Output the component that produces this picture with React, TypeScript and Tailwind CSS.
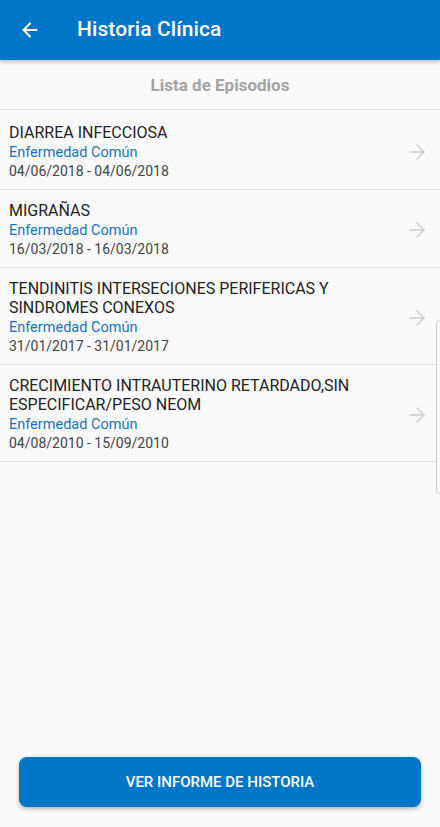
import { ArrowLeft, ArrowRight } from 'lucide-react';

type Episode = {
  title: string;
  type: string;
  dates: string;
};

const episodes: Episode[] = [
  { title: 'DIARREA INFECCIOSA', type: 'Enfermedad Común', dates: '04/06/2018 - 04/06/2018' },
  { title: 'MIGRAÑAS', type: 'Enfermedad Común', dates: '16/03/2018 - 16/03/2018' },
  {
    title: 'TENDINITIS INTERSECIONES PERIFERICAS Y SINDROMES CONEXOS',
    type: 'Enfermedad Común',
    dates: '31/01/2017 - 31/01/2017',
  },
  {
    title: 'CRECIMIENTO INTRAUTERINO RETARDADO,SIN ESPECIFICAR/PESO NEOM',
    type: 'Enfermedad Común',
    dates: '04/08/2010 - 15/09/2010',
  },
];

const App = () => {
  return (
    <div className="relative w-[440px] h-[827px] bg-[#fafafa] flex flex-col overflow-hidden font-['Roboto',sans-serif]">
      <header className="h-[60px] shrink-0 bg-[#0176c8] flex items-center shadow-[0_2px_4px_rgba(0,0,0,0.25)] z-10">
        <button className="w-[60px] h-full flex items-center justify-center text-white">
          <ArrowLeft size={22} strokeWidth={2.2} />
        </button>
        <h1 className="ml-[17px] text-white text-[21px] font-medium tracking-[0.1px]">Historia Clínica</h1>
      </header>

      <div className="h-[50px] shrink-0 flex items-center justify-center border-b border-[#dcdcdc]">
        <span className="text-[17px] font-bold text-[#a3a3a3] pt-[2px]">Lista de Episodios</span>
      </div>

      <ul className="flex flex-col">
        {episodes.map((ep, i) => (
          <li
            key={i}
            className={`flex items-center border-b border-[#dcdcdc] pl-[9px] pr-[11px] pb-[8px] ${i === 0 ? 'pt-[13px]' : 'pt-[11px]'}`}
          >
            <div className="flex-1 min-w-0 pr-[40px]">
              <p className="text-[16px] leading-[19px] text-[#222222]">{ep.title}</p>
              <p className="text-[14.5px] leading-[20px] text-[#1474c4] pt-[1px] -mb-[1px]">{ep.type}</p>
              <p className="text-[14px] leading-[19px] text-[#444444]">{ep.dates}</p>
            </div>
            <ArrowRight size={24} strokeWidth={1.4} className="text-[#cacaca] shrink-0" />
          </li>
        ))}
      </ul>

      <div className="flex-1" />

      <div className="px-[19px] pb-[20px]">
        <button className="w-full h-[50px] rounded-[8px] bg-[#0176c8] text-white text-[15px] font-medium shadow-[0_2px_4px_rgba(0,0,0,0.3)]">
          VER INFORME DE HISTORIA
        </button>
      </div>

      <div className="absolute right-[-4px] top-[320px] w-[8px] h-[174px] rounded-[4px] border border-[#cfcfcf] bg-[#fafafa]" />
    </div>
  );
};

export default App;
